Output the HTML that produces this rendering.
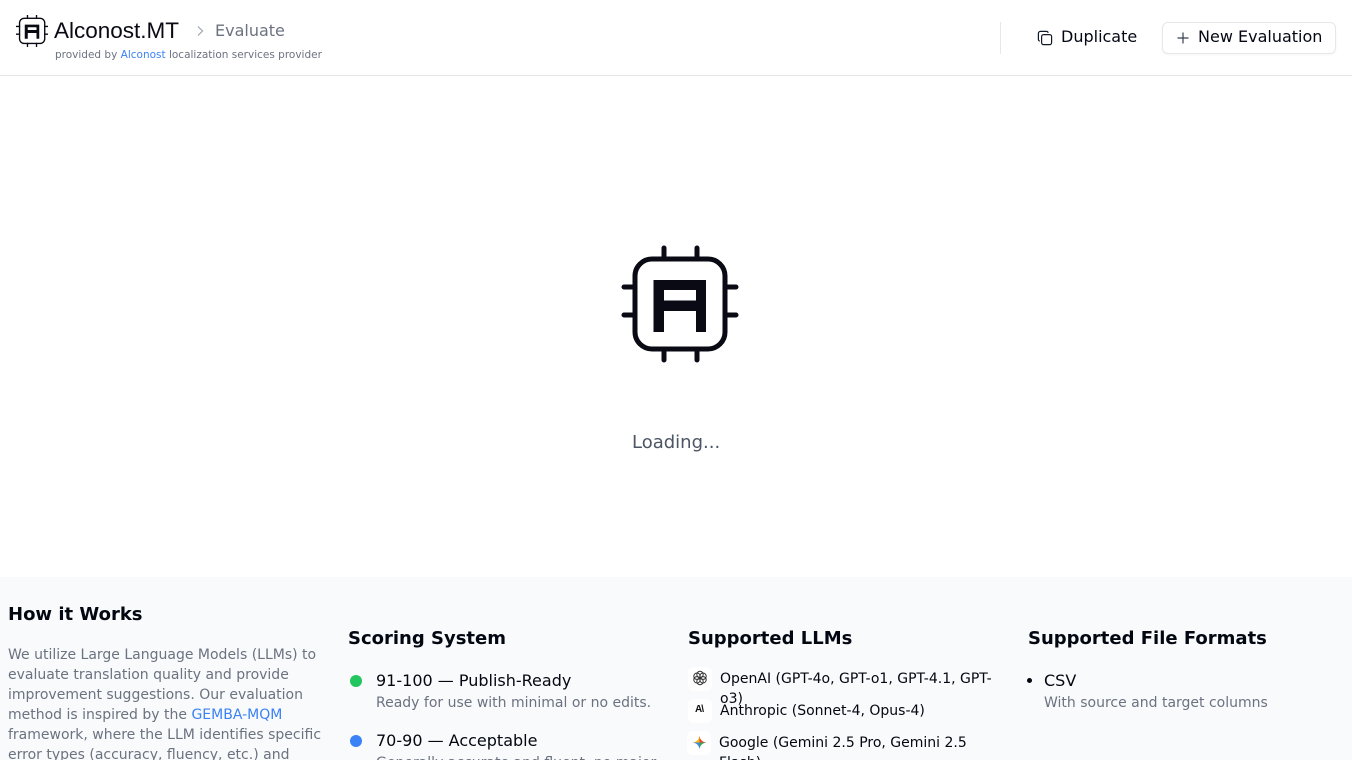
<!DOCTYPE html>
<html lang="en"><head><meta charset="utf-8"><title>Alconost.MT - Evaluate</title>
<style>
html,body{margin:0;padding:0;background:#fff;}
body{width:1352px;height:760px;overflow:hidden;position:relative;font-family:"DejaVu Sans",sans-serif;color:#030712;}
.a{position:absolute;white-space:nowrap;}
.h{font-size:18px;font-weight:700;line-height:28px;color:#030712;}
.t{font-size:16px;line-height:24px;color:#030712;}
.s{font-size:14px;line-height:20px;color:#6b7280;}
.l{font-size:14px;line-height:20px;color:#030712;}
.dot{position:absolute;width:12px;height:12px;border-radius:50%;}
.ic{position:absolute;width:24px;height:24px;border-radius:6px;background:#fff;}
</style></head><body>
<div class="a" style="left:0;top:0;width:1352px;height:76px;border-bottom:1px solid #e5e7eb;box-sizing:border-box;background:#fff"></div>

<svg class="a" style="left:16px;top:15px" width="32" height="32" viewBox="0 0 117 117">
<g fill="none" stroke="#0a0a14" stroke-width="5" stroke-linecap="round"><rect x="13" y="12" width="92" height="92" rx="17"/><path d="M42 1V12M75 1V12M42 104V115M75 104V115M1 42H13M1 70H13M105 42H117M105 70H117"/></g>
<path fill="#0a0a14" fill-rule="evenodd" d="M32 35H85V87H75V66H43V87H32ZM43 45V55H75V45Z"/></svg>
<div class="a" style="left:54px;top:17px;font:22.5px/28px 'Liberation Sans',sans-serif;color:#0a0a14;">Alconost.MT</div>
<svg class="a" style="left:192px;top:23px" width="16" height="16" viewBox="0 0 16 16"><path d="M6 3.5L10.5 8L6 12.5" fill="none" stroke="#9ca3af" stroke-width="1.2"/></svg>
<div class="a" style="left:215px;top:19px;font-size:16px;line-height:24px;color:#6b7280;">Evaluate</div>
<div class="a" style="left:55px;top:47px;font-size:10.5px;line-height:16px;color:#6b7280;">provided by <span style="color:#3b82f6">Alconost</span> localization services provider</div>

<div class="a" style="left:1000px;top:22px;width:1px;height:32px;background:#e5e7eb"></div>
<svg class="a" style="left:1037px;top:30px" width="16" height="16" viewBox="0 0 16 16" fill="none" stroke="#111827" stroke-width="1.2"><rect x="4.6" y="4.6" width="10" height="10" rx="2"/><path d="M2.8 11.2C2 11 1.400 10.300 1.400 9.400V3.400C1.400 2.300 2.300 1.400 3.400 1.400H9.400C10.300 1.400 11 2 11.200 2.800"/></svg>
<div class="a" style="left:1061px;top:25px;font-size:16px;line-height:24px;color:#030712;">Duplicate</div>
<div class="a" style="left:1162px;top:22px;width:174px;height:32px;box-sizing:border-box;border:1px solid #e5e7eb;border-radius:6px;background:#fff;box-shadow:0 1px 2px rgba(0,0,0,.04)"></div>
<svg class="a" style="left:1175px;top:30px" width="16" height="16" viewBox="0 0 16 16"><path d="M8 2.500V13.500M2.500 8H13.500" stroke="#374151" stroke-width="1.200" fill="none"/></svg>
<div class="a" style="left:1198px;top:25px;font-size:16px;line-height:24px;color:#030712;">New Evaluation</div>

<svg class="a" style="left:620px;top:245px" width="120" height="120" viewBox="0 0 120 120">
<g fill="none" stroke="#0a0a14" stroke-width="5" stroke-linecap="round"><rect x="15" y="14" width="90" height="90" rx="17"/><path d="M44 3V14M77 3V14M44 104V115M77 104V115M4 42H15M4 70H15M105 42H116M105 70H116"/></g>
<path fill="#0a0a14" fill-rule="evenodd" d="M33.500 35H86V87H76V66H44V87H33.500ZM44 45V55.500H76V45Z"/></svg>
<div class="a" style="left:632px;top:430px;font-size:18px;line-height:26px;color:#4b5563;">Loading...</div>

<div class="a" style="left:0;top:577px;width:1352px;height:183px;background:#f9fafb;overflow:hidden">
<div class="a h" style="left:8px;top:24px">How it Works</div>
<div class="a" style="left:8px;top:68px;font-size:14px;line-height:20px;color:#6b7280;">We utilize Large Language Models (LLMs) to<br>evaluate translation quality and provide<br>improvement suggestions. Our evaluation<br>method is inspired by the <span style="color:#3b82f6">GEMBA-MQM</span><br>framework, where the LLM identifies specific<br>error types (accuracy, fluency, etc.) and</div>

<div class="a h" style="left:348px;top:48px">Scoring System</div>
<div class="dot" style="left:350px;top:98px;background:#22c55e"></div>
<div class="a t" style="left:376px;top:92px">91-100 — Publish-Ready</div>
<div class="a s" style="left:376px;top:116px">Ready for use with minimal or no edits.</div>
<div class="dot" style="left:350px;top:158px;background:#3b82f6"></div>
<div class="a t" style="left:376px;top:152px">70-90 — Acceptable</div>
<div class="a s" style="left:376px;top:176px">Generally accurate and fluent, no major</div>

<div class="a h" style="left:688px;top:48px">Supported LLMs</div>
<div class="ic" style="left:688px;top:90px"></div>
<svg class="a" style="left:692px;top:93px" width="16" height="16" viewBox="0 0 16 16" fill="none" stroke="#333" stroke-width="1"><circle cx="8" cy="4.500" r="3.200"/><circle cx="11" cy="6.200" r="3.200"/><circle cx="11" cy="9.800" r="3.200"/><circle cx="8" cy="11.500" r="3.200"/><circle cx="5" cy="9.800" r="3.200"/><circle cx="5" cy="6.200" r="3.200"/></svg>
<div class="a l" style="left:720px;top:92px">OpenAI (GPT-4o, GPT-o1, GPT-4.1, GPT-<br>o3)</div>
<div class="ic" style="left:688px;top:122px"></div>
<div class="a" style="left:695px;top:127px;font:700 10px/12px 'Liberation Sans',sans-serif;color:#111;letter-spacing:-1px">A\</div>
<div class="a l" style="left:720px;top:124px">Anthropic (Sonnet-4, Opus-4)</div>
<div class="ic" style="left:687px;top:154px"></div>
<svg class="a" style="left:692px;top:158px" width="15" height="15" viewBox="0 0 16 16"><path d="M8 0.500C8.500 5 11 7.500 15.500 8H8Z" fill="#ea4335"/><path d="M15.500 8C11 8.500 8.500 11 8 15.500V8Z" fill="#34a853"/><path d="M8 15.500C7.500 11 5 8.500 0.500 8H8Z" fill="#4285f4"/><path d="M0.500 8C5 7.500 7.500 5 8 0.500V8Z" fill="#fbbc04"/></svg>
<div class="a l" style="left:719px;top:156px">Google (Gemini 2.5 Pro, Gemini 2.5<br>Flash)</div>

<div class="a h" style="left:1028px;top:48px">Supported File Formats</div>
<div class="dot" style="left:1027px;top:101px;width:5px;height:5px;background:#030712"></div>
<div class="a t" style="left:1044px;top:92px">CSV</div>
<div class="a s" style="left:1044px;top:116px">With source and target columns</div>
</div>
</body></html>
